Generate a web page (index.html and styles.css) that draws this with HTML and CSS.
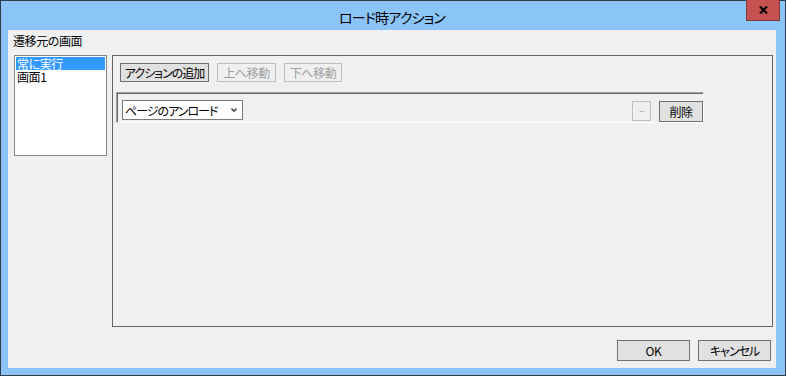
FILE: index.html
```html
<!DOCTYPE html>
<html>
<head>
  <title>ロード時アクション</title>
  <meta charset="utf-8">
  <link rel="stylesheet" href="styles.css">
</head>
<body>
  <div class="window">
    <div class="titlebar">
      <span class="title">ロード時アクション</span>
      <div class="close">
        <svg viewBox="0 0 9 8" width="9" height="8">
          <path d="M1 0.5 L8 7.5 M8 0.5 L1 7.5" stroke="#000" stroke-width="2.2" fill="none"/>
        </svg>
      </div>
    </div>

    <div class="client">
      <div class="group-label">遷移元の画面</div>

      <div class="main">
        <ul class="listbox">
          <li class="selected">常に実行</li>
          <li>画面1</li>
        </ul>

        <div class="panel">
          <div class="toolbar">
            <div class="btn add kana">アクションの追加</div>
            <div class="btn disabled up">上へ移動</div>
            <div class="btn disabled down">下へ移動</div>
          </div>

          <div class="action-row">
            <div class="combo">
              <span class="kana">ページのアンロード</span>
              <svg viewBox="0 0 6 4" width="6" height="4">
                <path d="M0.5 0.5 L3 3.2 L5.5 0.5" stroke="#4a4a4a" stroke-width="1.6" fill="none"/>
              </svg>
            </div>
            <div class="spacer"></div>
            <div class="btn disabled minus">−</div>
            <div class="btn delete">削除</div>
          </div>
        </div>
      </div>

      <div class="footer">
        <div class="btn dlg">OK</div>
        <div class="btn dlg kana">キャンセル</div>
      </div>
    </div>
  </div>
</body>
</html>
```

FILE: styles.css
```css
body {
  margin: 0;
  font-family: "Noto Sans CJK JP", "Liberation Sans", sans-serif;
  font-size: 12px;
  font-feature-settings: "palt";
  letter-spacing: -0.4px;
  color: #000;
}
.kana {
  letter-spacing: -1px;
}
.window {
  width: 786px;
  height: 376px;
  box-sizing: border-box;
  border: 1px solid #2f3d4a;
  background: #8bc5f8;
  padding: 0 9px 7px 7px;
  display: flex;
  flex-direction: column;
}
.titlebar {
  height: 29px;
  flex: none;
  display: flex;
  justify-content: center;
  align-items: center;
  position: relative;
}
.title {
  font-size: 14px;
  letter-spacing: -0.8px;
  padding-top: 2px;
}
.close {
  position: absolute;
  left: 738px;
  top: -1px;
  width: 34px;
  height: 21px;
  box-sizing: border-box;
  background: #c75050;
  border: 1px solid #7e3b3b;
  border-top: none;
  display: flex;
  align-items: center;
  justify-content: center;
}
.client {
  flex: 1;
  background: #f0f0f0;
  padding: 0 3px 0 6px;
  display: flex;
  flex-direction: column;
}
.group-label {
  height: 25px;
  box-sizing: border-box;
  padding-top: 3px;
  margin-left: -1px;
  line-height: 15px;
}
.main {
  height: 272px;
  display: flex;
  gap: 5px;
}
.listbox {
  width: 93px;
  height: 101px;
  box-sizing: border-box;
  margin: 0;
  padding: 1px;
  list-style: none;
  background: #fff;
  border: 1px solid #828790;
}
.listbox li {
  height: 13px;
  line-height: 13px;
  padding-left: 1px;
  white-space: nowrap;
}
.listbox li.selected {
  background: #3399ff;
  color: #fff;
}
.panel {
  flex: 1;
  border: 1px solid #646464;
  padding: 7px 0 0 3px;
}
.toolbar {
  display: flex;
  gap: 8px;
  padding-left: 4px;
}
.btn {
  box-sizing: border-box;
  height: 19px;
  display: flex;
  align-items: center;
  justify-content: center;
  background: #e1e1e1;
  border: 1px solid #707070;
  line-height: 1;
  white-space: nowrap;
}
.btn.disabled {
  background: #f0f0f0;
  border-color: #bfbfbf;
  color: #a0a0a0;
}
.add { width: 89px; }
.up { width: 59px; }
.down { width: 58px; }
.action-row {
  margin-top: 10px;
  width: 588px;
  height: 31px;
  box-sizing: border-box;
  border-top: 1px solid #a0a0a0;
  border-left: 1px solid #a0a0a0;
  border-right: 1px solid #fff;
  border-bottom: 1px solid #fff;
  box-shadow: inset 1px 1px 0 #696969;
  padding: 7px 0 0 5px;
  display: flex;
  align-items: flex-start;
}
.combo {
  width: 121px;
  height: 20px;
  box-sizing: border-box;
  background: #fff;
  border: 1px solid #7a7a7a;
  padding: 0 5px 0 2px;
  display: flex;
  align-items: center;
  justify-content: space-between;
  white-space: nowrap;
}
.spacer {
  flex: 1;
}
.minus {
  width: 19px;
  height: 20px;
  margin-top: 1px;
  font-size: 10px;
}
.delete {
  width: 44px;
  height: 21px;
  margin-top: 1px;
  margin-left: 8px;
}
.footer {
  display: flex;
  justify-content: flex-end;
  gap: 8px;
  padding: 13px 2px 0 0;
}
.dlg {
  width: 73px;
  height: 21px;
}
```
